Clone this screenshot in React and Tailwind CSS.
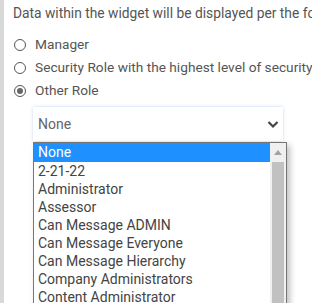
export default function App() {
  const items = [
    "2-21-22",
    "Administrator",
    "Assessor",
    "Can Message ADMIN",
    "Can Message Everyone",
    "Can Message Hierarchy",
    "Company Administrators",
    "Content Administrator",
    "Coach",
  ];
  const Radio = ({ checked, label }) => (
    <div className="flex items-center h-[23px]">
      <span className="w-[12px] h-[12px] rounded-full border border-[#555] flex items-center justify-center bg-white mr-[9px] shrink-0">
        {checked && <span className="w-[6px] h-[6px] rounded-full bg-[#666]" />}
      </span>
      <span className="text-[13.7px] text-[#555]">{label}</span>
    </div>
  );
  return (
    <div className="w-[312px] h-[303px] overflow-hidden bg-white flex" style={{ fontFamily: "Roboto, 'Open Sans', sans-serif" }}>
      <div className="w-[4px] shrink-0 bg-[#d9d9d9]" />
      <div className="flex-1 relative">
        <div className="pl-[9px] pt-[5px] whitespace-nowrap text-[13.8px] text-[#555] leading-[16px]">
          Data within the widget will be displayed per the following
        </div>
        <div className="pl-[10px] mt-[12px] flex flex-col whitespace-nowrap">
          <Radio label="Manager" />
          <Radio label="Security Role with the highest level of security" />
          <Radio checked label="Other Role" />
        </div>
        <div className="ml-[29px] mt-[5px] w-[250px] h-[34px] bg-white flex items-center justify-between pl-[5px] pr-[3px] shadow-[0_0_3px_rgba(120,170,230,0.45)]">
          <span className="text-[14px] text-[#666]">None</span>
          <svg width="14" height="14" viewBox="0 0 14 14">
            <path d="M2.5 5 L7 9.5 L11.5 5" fill="none" stroke="#444" strokeWidth="2.2" />
          </svg>
        </div>
        <div className="absolute left-[29px] top-[142px] w-[254px] h-[200px] bg-white border border-[#777] flex shadow-[3px_3px_6px_rgba(0,0,0,0.25)]">
          <div className="flex-1 flex flex-col">
            <div className="h-[19px] bg-[#1e90ff] text-white text-[14px] leading-[19px] pl-[4px]">None</div>
            {items.map((t) => (
              <div key={t} className="h-[18px] text-[14px] leading-[18px] pl-[4px] text-[#444] whitespace-nowrap">{t}</div>
            ))}
          </div>
          <div className="w-[16px] bg-[#f0f0f0] flex flex-col items-center">
            <div className="h-[19px] flex items-center justify-center">
              <svg width="8" height="5" viewBox="0 0 8 5"><path d="M0 5 L4 0 L8 5 Z" fill="#a3a3a3" /></svg>
            </div>
            <div className="w-[12px] flex-1 bg-[#c1c1c1]" />
          </div>
        </div>
      </div>
    </div>
  );
}
